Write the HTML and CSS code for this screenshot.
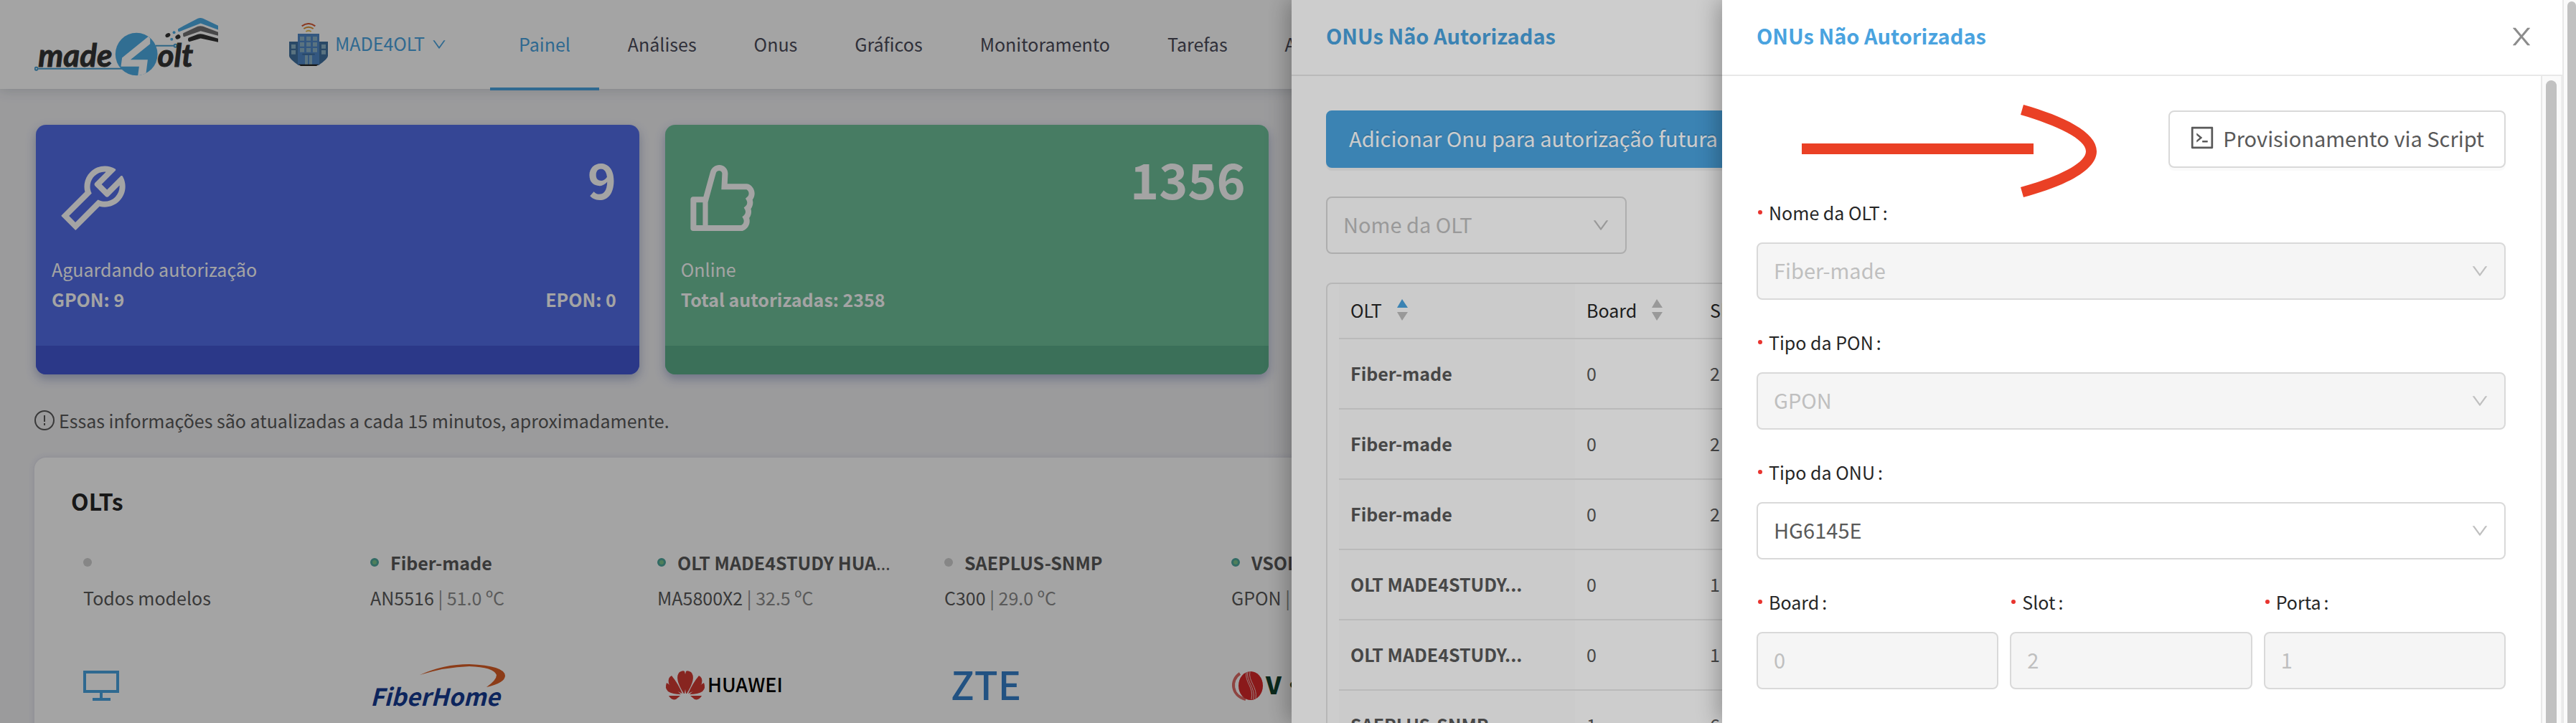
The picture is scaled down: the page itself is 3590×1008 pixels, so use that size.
FILE: index.html
```html
<!DOCTYPE html>
<html lang="pt-BR">
<head>
  <meta charset="UTF-8" />
  <meta name="viewport" content="width=device-width, initial-scale=1" />
  <title>Painel - MADE4OLT</title>
  <link rel="stylesheet" href="styles.css">
</head>
<body>

<!-- shared icons -->
<svg class="sprite" aria-hidden="true">
  <symbol id="down" viewBox="64 64 896 896">
    <path d="M884 256h-75c-5.1 0-9.9 2.5-12.9 6.6L512 654.2 227.9 262.6c-3-4.1-7.8-6.6-12.9-6.6h-75c-6.5 0-10.3 7.4-6.5 12.7l352.6 486.1c12.8 17.6 39 17.6 51.7 0l352.6-486.1c3.9-5.3.1-12.7-6.4-12.7z"/>
  </symbol>
</svg>

<div class="app">
  <header class="header">
    <svg class="logo" viewBox="24 15 770 245" role="img" aria-label="made4olt">
      <g fill="none" stroke="#4a9ed0" stroke-width="6">
        <path d="M40 230H390M530 134H606"/>
        <circle cx="32" cy="230" r="6"/>
        <circle cx="613" cy="134" r="6"/>
      </g>
      <ellipse cx="450" cy="169" rx="88" ry="89" fill="#4eabe3"/>
      <path fill="#fff" d="M500 95L390 184L385 221H461L456 258Q476 257 490 248L497 192H425L507 126V104Z"/>
      <g class="logo-text">
        <text x="40" y="220">made</text>
        <text x="538" y="220">olt</text>
      </g>
      <path fill="#4eabe3" d="M624 63L706 20Q717 15 728 20L791 50V67L718 40L628 75Q621 75 624 63Z"/>
      <path fill="#707072" d="M645 81L706 53Q717 49 728 53L791 77V92L718 72L648 97Q643 93 645 81Z"/>
      <path fill="#353535" d="M667 101L706 86Q717 82 728 86L791 104V119L718 103L670 117Q662 112 667 101Z"/>
      <g fill="#353535">
        <ellipse cx="581" cy="90" rx="11" ry="8" transform="rotate(-30 581 90)"/>
        <ellipse cx="623" cy="97" rx="11" ry="9" transform="rotate(-30 623 97)"/>
      </g>
      <g fill="#4eabe3">
        <circle cx="607" cy="78" r="6"/>
        <circle cx="597" cy="107" r="6"/>
      </g>
    </svg>

    <button class="tenant" type="button">
      <svg class="building" viewBox="0 0 162 180" aria-hidden="true">
        <g fill="none" stroke-width="6">
          <path stroke="#d65a35" d="M53 13Q81-7 109 13"/>
          <path stroke="#e09330" d="M61 24Q81 10 101 24"/>
          <path stroke="#e8bf55" d="M70 36Q81 28 92 36"/>
        </g>
        <path fill="#40709f" d="M0 78H162V138Q162 150 124 176H38Q0 150 0 138Z"/>
        <path fill="#5088c8" d="M36 45H126V176H36Z"/>
        <path fill="#8db4c8" d="M45 57h18v17H45zM72 57h18v17H72zM99 57h18v17H99zM45 81h18v17H45zM72 81h18v17H72zM99 81h18v17H99zM45 105h18v17H45zM72 105h18v17H72zM99 105h18v17H99zM9 90h18v17H9zM9 114h18v17H9zM135 90h18v17H135zM135 114h18v17H135zM66 135h12v39H66zM84 135h12v39H84z"/>
        <path fill="#40709f" d="M55 128H107V134H55Z"/>
        <path fill="#252525" d="M38 173H124L114 180H48Z"/>
      </svg>
      <span>MADE4OLT</span>
      <svg class="chevron-sm" aria-hidden="true"><use href="#down"/></svg>
    </button>

    <nav class="nav">
      <a class="tab active" href="#painel">Painel</a>
      <a class="tab" href="#analises">Análises</a>
      <a class="tab" href="#onus">Onus</a>
      <a class="tab" href="#graficos">Gráficos</a>
      <a class="tab" href="#monitoramento">Monitoramento</a>
      <a class="tab" href="#tarefas">Tarefas</a>
      <a class="tab" href="#alarmes">Alarmes</a>
    </nav>
  </header>

  <main class="main">
    <section class="stats">
      <article class="stat stat-blue">
        <div class="stat-body">
          <div class="stat-top">
            <svg viewBox="64 64 896 896" aria-hidden="true"><path d="M876.6 239.5c-.5-.9-1.2-1.8-2-2.5-5-5-13.1-5-18.1 0L684.2 409.3l-67.9-67.9L788.7 169c.8-.8 1.4-1.6 2-2.5 3.6-6.1 1.6-13.9-4.5-17.5-98.2-58-226.8-44.7-311.3 39.7-67 67-89.2 162-66.5 247.4l-293 293c-3 3-2.8 7.9.3 11l169.7 169.7c3.1 3.1 8.1 3.3 11 .3l292.9-292.9c85.5 22.8 180.5.7 247.6-66.4 84.4-84.5 97.7-213.1 39.7-311.3zM786 499.8c-58.1 58.1-145.3 69.3-214.6 33.6l-8.8 8.8-.1-.1-274 274.1-79.2-79.2 230.1-230.1s0 .1.1.1l52.8-52.8c-35.7-69.3-24.5-156.5 33.6-214.6a184.2 184.2 0 01144-53.5L537 318.9a32.05 32.05 0 000 45.3l124.5 124.5a32.05 32.05 0 0045.3 0l132.8-132.8c3.7 51.8-14.4 104.8-53.6 143.9z"/></svg>
            <strong class="stat-value">9</strong>
          </div>
          <div class="stat-label">Aguardando autorização</div>
          <div class="stat-detail"><span>GPON: 9</span><span>EPON: 0</span></div>
        </div>
        <div class="stat-foot"></div>
      </article>

      <article class="stat stat-green">
        <div class="stat-body">
          <div class="stat-top">
            <svg viewBox="64 64 896 896" aria-hidden="true"><path d="M885.9 533.7c16.8-22.2 26.1-49.4 26.1-77.7 0-44.9-25.1-87.4-65.5-111.1a67.67 67.67 0 00-34.3-9.3H572.4l6-122.9c1.4-29.7-9.1-57.9-29.5-79.4A106.62 106.62 0 00471 99.9c-52 0-98 35-111.8 85.1l-85.9 311H144c-17.7 0-32 14.3-32 32v364c0 17.7 14.3 32 32 32h601.3c9.2 0 18.2-1.8 26.5-5.4 47.6-20.3 78.3-66.8 78.3-118.4 0-12.6-1.8-25-5.4-37 16.8-22.2 26.1-49.4 26.1-77.7 0-12.6-1.8-25-5.4-37 16.8-22.2 26.1-49.4 26.1-77.7-.2-12.6-2-25.1-5.6-37.1zM184 852V568h81v284h-81zm636.4-353l-21.9 19 13.9 25.4a56.2 56.2 0 016.9 27.3c0 16.5-7.2 32.2-19.6 43l-21.9 19 13.9 25.4a56.2 56.2 0 016.9 27.3c0 16.5-7.2 32.2-19.6 43l-21.9 19 13.9 25.4a56.2 56.2 0 016.9 27.3c0 22.4-13.2 42.6-33.6 51.8H329V564.8l99.5-360.5a44.1 44.1 0 0142.2-32.3c7.6 0 15.1 2.2 21.1 6.7 9.9 7.4 15.2 18.6 14.6 30.5l-9.6 198.4h314.4C829 418.5 840 436.9 840 456c0 16.5-7.2 32.1-19.6 43z"/></svg>
            <strong class="stat-value">1356</strong>
          </div>
          <div class="stat-label">Online</div>
          <div class="stat-detail"><span>Total autorizadas: 2358</span></div>
        </div>
        <div class="stat-foot"></div>
      </article>
    </section>

    <p class="notice">
      <svg viewBox="0 0 28 28" aria-hidden="true">
        <circle cx="14" cy="14" r="13" fill="none" stroke="currentColor" stroke-width="2"/>
        <path d="M13 7h2v9h-2zM13 18h2v3h-2z"/>
      </svg>
      Essas informações são atualizadas a cada 15 minutos, aproximadamente.
    </p>

    <section class="olts">
      <h2>OLTs</h2>
      <div class="olt-list">
        <div class="olt">
          <div class="olt-name"><i class="dot"></i></div>
          <div class="olt-model">Todos modelos</div>
          <svg class="brand" viewBox="0 0 50 60" width="50" height="60" aria-hidden="true">
            <path fill="none" stroke="#4aa3df" stroke-width="4" d="M2 11H48V38H2ZM25 38V48M13 49H38"/>
          </svg>
        </div>
        <div class="olt">
          <div class="olt-name"><i class="dot on"></i><b>Fiber-made</b></div>
          <div class="olt-model">AN5516 <span>| 51.0 ºC</span></div>
          <svg class="brand" viewBox="0 0 188 60" width="188" height="60" role="img" aria-label="FiberHome">
            <text class="fiberhome" x="0" y="58">FiberHome</text>
            <path fill="#da5e26" d="M69 15Q102 0 138 0Q187 2 188 16Q188 26 162 32Q176 22 176 15Q172 4 138 3Q104 4 69 15Z"/>
          </svg>
        </div>
        <div class="olt">
          <div class="olt-name"><i class="dot on"></i><b>OLT MADE4STUDY HUA<span class="more">…</span></b></div>
          <div class="olt-model">MA5800X2 <span>| 32.5 ºC</span></div>
          <svg class="brand" viewBox="0 0 180 60" width="180" height="60" role="img" aria-label="Huawei">
            <g fill="#d23a34">
              <path d="M37 41Q23 19 31 11Q36 8 38 10Q42 21 38 41Z"/>
              <path d="M35 41Q29 27 20 16Q14 19 16 27Q20 35 35 41Z"/>
              <path d="M33 42Q22 31 13 26Q10 33 15 38Q21 42 33 42Z"/>
              <path d="M32 44H16Q20 51 26 49Z"/>
              <path d="M41 41Q55 19 47 11Q42 8 40 10Q36 21 40 41Z"/>
              <path d="M43 41Q49 27 58 16Q64 19 62 27Q58 35 43 41Z"/>
              <path d="M45 42Q56 31 65 26Q68 33 63 38Q57 42 45 42Z"/>
              <path d="M46 44H62Q58 51 52 49Z"/>
            </g>
            <text class="huawei" x="70" y="39">HUAWEI</text>
          </svg>
        </div>
        <div class="olt">
          <div class="olt-name"><i class="dot"></i><b>SAEPLUS-SNMP</b></div>
          <div class="olt-model">C300 <span>| 29.0 ºC</span></div>
          <svg class="brand" viewBox="0 0 120 60" width="120" height="60" role="img" aria-label="ZTE">
            <text class="zte" x="9" y="50">ZTE</text>
          </svg>
        </div>
        <div class="olt">
          <div class="olt-name"><i class="dot on"></i><b>VSOL</b></div>
          <div class="olt-model">GPON <span>| 0 ºC</span></div>
          <svg class="brand" viewBox="0 0 150 60" width="150" height="60" role="img" aria-label="V-SOL">
            <path fill="none" stroke="#dc6a66" stroke-width="4" d="M12 13C-2 22 0 44 20 49"/>
            <ellipse cx="27" cy="30" rx="17" ry="20" fill="#d6292a"/>
            <path fill="none" stroke="#f0c4c2" stroke-width="1" d="M21 11C18 25 32 32 28 49M23 10C20 24 34 32 31 49M26 10C23 24 37 32 34 48"/>
            <text class="vsol" x="48" y="42">V·SOL</text>
          </svg>
        </div>
      </div>
    </section>
  </main>

  <div class="mask"></div>

  <!-- unauthorized ONUs -->
  <aside class="drawer drawer-list">
    <div class="drawer-head"><h3>ONUs Não Autorizadas</h3></div>
    <div class="drawer-body">
      <button class="btn btn-primary" type="button">Adicionar Onu para autorização futura</button>
      <div class="select filter">
        <select aria-label="Nome da OLT"><option>Nome da OLT</option></select>
        <svg aria-hidden="true"><use href="#down"/></svg>
      </div>
      <div class="table-box">
        <table>
          <colgroup><col class="col-olt"><col class="col-board"><col></colgroup>
          <thead>
            <tr>
              <th><span class="sort">OLT
                <svg viewBox="0 0 15 30" aria-hidden="true"><path class="asc" d="M7 0L15 12H0Z"/><path d="M7 30L0 18H15Z"/></svg></span></th>
              <th><span class="sort">Board
                <svg viewBox="0 0 15 30" aria-hidden="true"><path d="M7 0L15 12H0Z"/><path d="M7 30L0 18H15Z"/></svg></span></th>
              <th>Slot</th>
            </tr>
          </thead>
          <tbody>
            <tr><td>Fiber-made</td><td>0</td><td>2</td></tr>
            <tr><td>Fiber-made</td><td>0</td><td>2</td></tr>
            <tr><td>Fiber-made</td><td>0</td><td>2</td></tr>
            <tr><td>OLT MADE4STUDY...</td><td>0</td><td>1</td></tr>
            <tr><td>OLT MADE4STUDY...</td><td>0</td><td>1</td></tr>
            <tr><td>SAEPLUS-SNMP</td><td>1</td><td>6</td></tr>
          </tbody>
        </table>
      </div>
    </div>
  </aside>

  <div class="mask"></div>

  <!-- authorization form -->
  <aside class="drawer drawer-form">
    <div class="drawer-head">
      <h3>ONUs Não Autorizadas</h3>
      <button class="close" type="button" aria-label="Fechar">
        <svg viewBox="64 64 896 896"><path d="M563.8 512l262.5-312.9c4.4-5.2.7-13.1-6.1-13.1h-79.8c-4.7 0-9.2 2.1-12.3 5.7L511.6 449.8 295.1 191.7c-3-3.6-7.5-5.7-12.3-5.7H203c-6.8 0-10.5 7.9-6.1 13.1L459.4 512 196.9 824.9A7.95 7.95 0 00203 838h79.8c4.7 0 9.2-2.1 12.3-5.7l216.5-258.1 216.5 258.1c3 3.6 7.5 5.7 12.3 5.7h79.8c6.8 0 10.5-7.9 6.1-13.1L563.8 512z"/></svg>
      </button>
    </div>
    <div class="drawer-scroll">
      <form class="drawer-body">
        <div class="actions">
          <svg class="arrow" viewBox="0 0 412 130" aria-hidden="true">
            <path d="M0 54H323V69H0Z"/>
            <path d="M309 0C365 16 411 38 411 65C411 92 365 114 309 129L305 115C356 101 396 82 396 65C396 48 356 29 305 14Z"/>
          </svg>
          <button class="btn" type="button">
            <svg viewBox="64 64 896 896" aria-hidden="true"><path d="M516 673c0 4.4 3.4 8 7.5 8h185c4.1 0 7.5-3.6 7.5-8v-48c0-4.4-3.4-8-7.5-8h-185c-4.1 0-7.5 3.6-7.5 8v48zm-194.9 6.1l192-161c3.8-3.2 3.8-9.1 0-12.3l-192-160.9A7.95 7.95 0 00308 351v62.7c0 2.4 1 4.6 2.9 6.1L420.7 512l-109.8 92.2a8.1 8.1 0 00-2.9 6.1V673c0 6.8 7.9 10.5 13.1 6.1zM880 112H144c-17.7 0-32 14.3-32 32v736c0 17.7 14.3 32 32 32h736c17.7 0 32-14.3 32-32V144c0-17.7-14.3-32-32-32zm-40 728H184V184h656v656z"/></svg>
            Provisionamento via Script
          </button>
        </div>

        <div class="field">
          <label for="olt">Nome da OLT</label>
          <div class="select">
            <select id="olt" disabled><option>Fiber-made</option></select>
            <svg aria-hidden="true"><use href="#down"/></svg>
          </div>
        </div>
        <div class="field">
          <label for="pon">Tipo da PON</label>
          <div class="select">
            <select id="pon" disabled><option>GPON</option></select>
            <svg aria-hidden="true"><use href="#down"/></svg>
          </div>
        </div>
        <div class="field">
          <label for="onu">Tipo da ONU</label>
          <div class="select">
            <select id="onu"><option>HG6145E</option></select>
            <svg aria-hidden="true"><use href="#down"/></svg>
          </div>
        </div>
        <div class="field-row">
          <div class="field">
            <label for="board">Board</label>
            <input id="board" type="text" value="0" disabled>
          </div>
          <div class="field">
            <label for="slot">Slot</label>
            <input id="slot" type="text" value="2" disabled>
          </div>
          <div class="field">
            <label for="porta">Porta</label>
            <input id="porta" type="text" value="1" disabled>
          </div>
        </div>
      </form>
      <div class="scrollbar scrollbar-inner"><div class="thumb"></div></div>
    </div>
  </aside>

  <div class="scrollbar scrollbar-page"><div class="thumb"></div></div>
</div>

</body>
</html>
```
FILE: styles.css
```css
* {
  box-sizing: border-box;
}
body {
  margin: 0;
  font-family: "Noto Sans CJK SC", "Noto Sans", sans-serif;
  font-size: 25px;
  line-height: 44px;
  color: #595959;
}
button, input, select {
  font: inherit;
  color: inherit;
}
svg {
  display: block;
  fill: currentColor;
  flex: none;
}
.sprite {
  position: absolute;
  width: 0;
  height: 0;
}
.app {
  position: relative;
  height: 100vh;
  overflow: hidden;
  background: #f0f0f3;
}

/* header */
.header {
  display: flex;
  align-items: center;
  height: 124px;
  padding-left: 48px;
  background: #fff;
  box-shadow: 0 2px 16px rgba(40, 60, 80, 0.18);
}
.logo {
  width: 257px;
  height: 82px;
  margin-top: 6px;
}
.logo-text {
  font: italic 700 132px Lato, sans-serif;
  fill: #353535;
  stroke: #353535;
  stroke-width: 3px;
}
.tenant {
  display: flex;
  align-items: center;
  margin: 0 61px 0 98px;
  padding: 0;
  border: 0;
  background: none;
  color: #4aa3df;
}
.tenant span {
  padding-bottom: 4px;
}
.building {
  width: 54px;
  height: 60px;
  margin-right: 10px;
}
.chevron-sm {
  width: 20px;
  height: 20px;
  margin-left: 10px;
}
.nav {
  display: flex;
  align-self: stretch;
}
.tab {
  height: 126px;
  padding: 0 40px;
  line-height: 122px;
  color: #4b4b5a;
  text-decoration: none;
}
.tab.active {
  color: #4aa3df;
  border-bottom: 4px solid #4aa3df;
}

/* dashboard */
.main {
  padding: 50px 67px 0 48px;
}
.stats {
  display: grid;
  grid-template-columns: repeat(4, 1fr);
  gap: 36px;
  margin: 0 2px;
}
.stat {
  border-radius: 14px;
  overflow: hidden;
  color: #fff;
  box-shadow: 0 6px 14px rgba(70, 90, 160, 0.4);
}
.stat-body {
  height: 308px;
  padding: 32px 32px 0 22px;
}
.stat-foot {
  height: 40px;
}
.stat-blue {
  background: #546ee8;
}
.stat-blue .stat-foot {
  background: #4457d4;
}
.stat-green {
  background: #6fc19b;
}
.stat-green .stat-foot {
  background: #5daf8a;
}
.stat-top {
  display: flex;
  justify-content: space-between;
  height: 147px;
}
.stat-top svg {
  width: 100px;
  height: 100px;
  margin: 20px 0 0 8px;
}
.stat-value {
  font-size: 68px;
  line-height: 86px;
}
.stat-detail {
  display: flex;
  justify-content: space-between;
  line-height: 40px;
  font-weight: 700;
}
.notice {
  display: flex;
  align-items: center;
  gap: 6px;
  margin: 42px 0 30px;
}
.notice svg {
  width: 28px;
  height: 28px;
}
.olts {
  min-height: 500px;
  padding: 36px 51px;
  border-radius: 16px;
  background: #fff;
  box-shadow: 0 0 8px rgba(80, 80, 160, 0.15);
}
.olts h2 {
  margin: 0 0 40px;
  font-size: 32px;
  line-height: 48px;
  color: #262626;
}
.olt-list {
  display: grid;
  grid-auto-flow: column;
  grid-auto-columns: 400px;
  padding-left: 17px;
}
.olt-name {
  display: flex;
  align-items: center;
  gap: 16px;
  height: 44px;
}
.olt-name b {
  white-space: nowrap;
}
.more {
  font-family: "Noto Sans", sans-serif;
  font-weight: 400;
}
.dot {
  flex: none;
  width: 12px;
  height: 12px;
  border-radius: 50%;
  background: #d0d0d0;
}
.dot.on {
  background: #7cc68c;
  border: 3px solid #4fa69c;
}
.olt-model {
  margin-top: 5px;
}
.olt-model span {
  color: #8c8c8c;
}
.brand {
  margin-top: 71px;
  overflow: visible;
}
.fiberhome {
  font: italic 700 33px "Noto Sans CJK SC", sans-serif;
  fill: #163b91;
}
.huawei {
  font: 500 27px "Noto Sans CJK SC", sans-serif;
  fill: #000;
}
.zte {
  font: 500 54px "Noto Sans CJK SC", sans-serif;
  fill: #3680ca;
}
.vsol {
  font: 900 34px "Noto Sans CJK SC", sans-serif;
  fill: #12402c;
}

/* overlays */
.mask {
  position: absolute;
  inset: 0;
  background: rgba(0, 0, 0, 0.195);
}
.drawer {
  position: absolute;
  top: 0;
  bottom: 0;
  right: 19px;
  display: flex;
  flex-direction: column;
  background: #fff;
  box-shadow: -6px 0 28px rgba(0, 0, 0, 0.28);
}
.drawer-list {
  width: 1771px;
}
.drawer-form {
  width: 1171px;
}
.drawer-head {
  display: flex;
  flex: none;
  justify-content: space-between;
  align-items: center;
  height: 106px;
  padding: 0 40px 6px 48px;
  border-bottom: 2px solid #e8e8e8;
}
.drawer-head h3 {
  margin: 0;
  font-size: 29px;
  line-height: 44px;
  color: #4aa3df;
}
.close {
  padding: 4px 0 0;
  border: 0;
  background: none;
  color: #8c8c8c;
}
.close svg {
  width: 34px;
  height: 34px;
}
.drawer-body {
  flex: 1;
  padding: 48px;
}
.btn {
  display: flex;
  align-items: center;
  gap: 12px;
  height: 80px;
  padding: 0 28px 4px;
  border: 2px solid #d9d9d9;
  border-radius: 8px;
  background: #fff;
  font-size: 29px;
  box-shadow: 0 4px 0 rgba(0, 0, 0, 0.02);
}
.btn svg {
  width: 34px;
  height: 34px;
}
.btn-primary {
  padding: 0 30px 4px;
  border-color: #4aa3df;
  background: #4aa3df;
  color: #fff;
  text-shadow: 0 -2px 0 rgba(0, 0, 0, 0.12);
  box-shadow: 0 4px 0 rgba(0, 0, 0, 0.045);
}

/* form controls */
.select {
  position: relative;
}
.select svg {
  position: absolute;
  top: 28px;
  right: 24px;
  width: 24px;
  height: 24px;
  color: #bfbfbf;
  pointer-events: none;
}
select, input {
  display: block;
  width: 100%;
  height: 80px;
  padding: 0 22px 4px;
  border: 2px solid #d9d9d9;
  border-radius: 8px;
  background: #fff;
  font-size: 29px;
  appearance: none;
}
select:disabled, input:disabled {
  background: #f5f5f5;
  color: #bfbfbf;
  opacity: 1;
}
.filter {
  width: 419px;
  margin: 40px 0;
}
.filter select {
  color: #bfbfbf;
}
.field {
  margin-bottom: 37px;
}
.field label {
  display: flex;
  align-items: center;
  height: 44px;
  margin-bottom: 20px;
  color: #262626;
}
.field label::before {
  content: "";
  width: 6px;
  height: 6px;
  margin: 0 9px 0 2px;
  border-radius: 50%;
  background: #e8342f;
}
.field label::after {
  content: ":";
  margin-left: 4px;
}
.field-row {
  display: grid;
  grid-template-columns: repeat(3, 1fr);
  gap: 16px;
}
.actions {
  display: flex;
  justify-content: flex-end;
  gap: 99px;
  margin-bottom: 40px;
}
.arrow {
  width: 412px;
  height: 130px;
  margin: -8px 0 -42px;
  fill: #ea4025;
}

/* table */
.table-box {
  border: 2px solid #e4e4e4;
  border-radius: 8px;
  padding: 0 16px;
}
table {
  width: 100%;
  table-layout: fixed;
  border-collapse: collapse;
}
.col-olt {
  width: 329px;
}
.col-board {
  width: 172px;
}
th, td {
  height: 98px;
  padding: 0 16px 3px;
  border-bottom: 2px solid #e8e8e8;
  text-align: left;
}
th {
  height: 76px;
  font-weight: 400;
  color: #262626;
}
th:first-child, td:first-child {
  background: #fdfdfd;
}
td:first-child {
  font-weight: 700;
}
.sort {
  display: flex;
  align-items: center;
  gap: 21px;
}
.sort svg {
  width: 15px;
  height: 30px;
  fill: #bfbfbf;
}
.sort .asc {
  fill: #4aa3df;
}

/* scrollbars */
.drawer-scroll {
  display: flex;
  flex: 1;
  min-height: 0;
}
.scrollbar {
  width: 30px;
  padding: 6px 6px 0 5px;
  border-left: 2px solid #e8e8e8;
  border-right: 2px solid #ededed;
  background: #fafafa;
}
.scrollbar .thumb {
  height: 100%;
  border-radius: 8px 8px 0 0;
  background: #c1c1c1;
}
.drawer-form .drawer-body {
  padding: 48px 49px 0 48px;
}
.scrollbar-page {
  position: absolute;
  top: 0;
  right: 0;
  bottom: 0;
  width: 19px;
  padding: 2px 0 0 5px;
  border-right: 0;
}
```
